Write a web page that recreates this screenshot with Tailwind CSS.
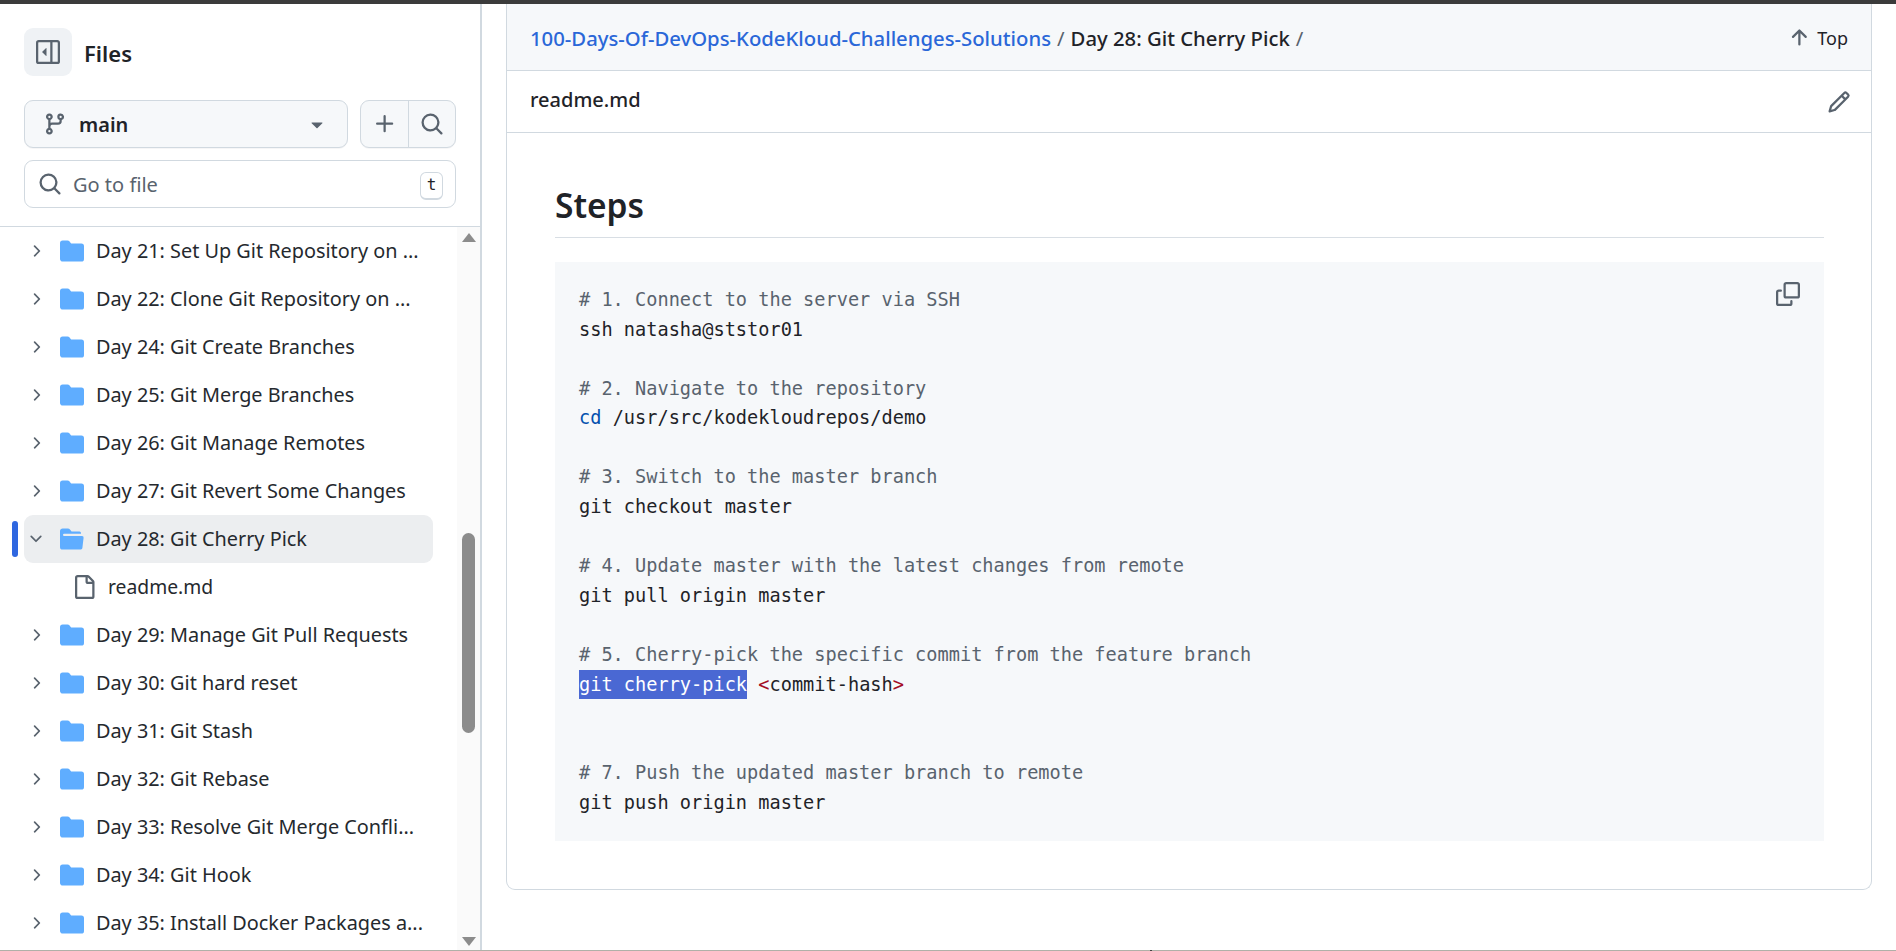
<!DOCTYPE html>
<html lang="en">
<head>
    <meta charset="UTF-8">
    <title>Day 28: Git Cherry Pick</title>
    <script src="https://cdn.jsdelivr.net/npm/@tailwindcss/browser@4"></script>
</head>
<body class="h-screen overflow-hidden flex flex-col bg-white text-[#1f2328] font-['Noto_Sans',sans-serif]">
    <!-- Icon sprites -->
    <svg class="hidden">
        <symbol id="chev-right" viewBox="0 0 16 16"><path d="M6.22 3.22a.75.75 0 0 1 1.06 0l4.25 4.25a.75.75 0 0 1 0 1.06l-4.25 4.25a.751.751 0 0 1-1.042-.018.751.751 0 0 1-.018-1.042L9.94 8 6.22 4.28a.75.75 0 0 1 0-1.06Z"/></symbol>
        <symbol id="chev-down" viewBox="0 0 16 16"><path d="M12.78 5.22a.749.749 0 0 1 0 1.06l-4.25 4.25a.749.749 0 0 1-1.06 0L3.22 6.28a.749.749 0 1 1 1.06-1.06L8 8.939l3.72-3.719a.749.749 0 0 1 1.06 0Z"/></symbol>
        <symbol id="folder" viewBox="0 0 16 16"><path d="M1.75 1A1.75 1.75 0 0 0 0 2.75v10.5C0 14.216.784 15 1.75 15h12.5A1.75 1.75 0 0 0 16 13.25v-8.5A1.75 1.75 0 0 0 14.25 3H7.5a.25.25 0 0 1-.2-.1l-.9-1.2C6.07 1.26 5.55 1 5 1H1.75Z"/></symbol>
        <symbol id="folder-open" viewBox="0 0 16 16"><path d="M.513 1.513A1.75 1.75 0 0 1 1.75 1h3.5c.55 0 1.07.26 1.4.7l.9 1.2a.25.25 0 0 0 .2.1H13a1 1 0 0 1 1 1v.5H2.75a.75.75 0 0 0 0 1.5h11.978a1 1 0 0 1 .994 1.117L15 13.25A1.75 1.75 0 0 1 13.25 15H1.75A1.75 1.75 0 0 1 0 13.25V2.75c0-.464.184-.91.513-1.237Z"/></symbol>
        <symbol id="search" viewBox="0 0 16 16"><path d="M10.68 11.74a6 6 0 0 1-7.922-8.982 6 6 0 0 1 8.982 7.922l3.04 3.04a.749.749 0 0 1-.326 1.275.749.749 0 0 1-.734-.215ZM11.5 7a4.499 4.499 0 1 0-8.997 0A4.499 4.499 0 0 0 11.5 7Z"/></symbol>
    </svg>

    <div class="h-1 shrink-0 bg-[#3b3b3b]"></div>

    <div class="flex-1 min-h-0 flex">
        <!-- Sidebar -->
        <aside class="w-[482px] shrink-0 flex flex-col border-r-2 border-[#d1d9e0]">
            <div class="shrink-0 h-[223px] px-6 border-b border-[#d1d9e0]">
                <div class="flex items-center gap-[12px] pt-6">
                    <button class="w-12 h-12 rounded-[9px] bg-[#eff2f5] flex items-center justify-center text-[#59636e]">
                        <svg class="w-6 h-6" viewBox="0 0 16 16" fill="currentColor"><path d="M4.177 7.823l2.396-2.396A.25.25 0 0 1 7 5.604v4.792a.25.25 0 0 1-.427.177L4.177 8.177a.25.25 0 0 1 0-.354Z"/><path d="M1.75 0h12.5C15.216 0 16 .784 16 1.75v12.5A1.75 1.75 0 0 1 14.25 16H1.75A1.75 1.75 0 0 1 0 14.25V1.75C0 .784.784 0 1.75 0ZM1.5 1.75v12.5c0 .138.112.25.25.25H9.5v-13H1.75a.25.25 0 0 0-.25.25ZM11 14.5h3.25a.25.25 0 0 0 .25-.25V1.75a.25.25 0 0 0-.25-.25H11Z"/></svg>
                    </button>
                    <h2 class="text-[22px] font-semibold leading-none pt-[1px]">Files</h2>
                </div>
                <div class="flex gap-3 mt-6">
                    <button class="w-[324px] h-12 rounded-[9px] border border-[#d1d9e0] bg-[#f6f8fa] flex items-center pl-[18px] pr-[18px] shadow-[0_1px_0_rgba(31,35,40,0.04)]">
                        <svg class="w-6 h-6 text-[#59636e]" viewBox="0 0 16 16" fill="currentColor"><path d="M9.5 3.25a2.25 2.25 0 1 1 3 2.122V6A2.5 2.5 0 0 1 10 8.5H6a1 1 0 0 0-1 1v1.128a2.251 2.251 0 1 1-1.5 0V5.372a2.25 2.25 0 1 1 1.5 0v1.836A2.493 2.493 0 0 1 6 7h4a1 1 0 0 0 1-1v-.628A2.25 2.25 0 0 1 9.5 3.25Zm-6 0a.75.75 0 1 0 1.5 0 .75.75 0 0 0-1.5 0Zm8.25-.75a.75.75 0 1 0 0 1.5.75.75 0 0 0 0-1.5ZM4.25 12a.75.75 0 1 0 0 1.5.75.75 0 0 0 0-1.5Z"/></svg>
                        <span class="ml-[12px] pt-[2px] text-[20px] font-semibold">main</span>
                        <svg class="w-6 h-6 ml-auto text-[#59636e]" viewBox="0 0 16 16" fill="currentColor"><path d="m4.427 7.427 3.396 3.396a.25.25 0 0 0 .354 0l3.396-3.396A.25.25 0 0 0 11.396 7H4.604a.25.25 0 0 0-.177.427Z"/></svg>
                    </button>
                    <div class="w-24 h-12 rounded-[9px] border border-[#d1d9e0] bg-[#f6f8fa] flex shadow-[0_1px_0_rgba(31,35,40,0.04)]">
                        <button class="w-12 border-r border-[#d1d9e0] flex items-center justify-center text-[#59636e]">
                            <svg class="w-6 h-6" viewBox="0 0 16 16" fill="currentColor"><path d="M7.75 2a.75.75 0 0 1 .75.75V7h4.25a.75.75 0 0 1 0 1.5H8.5v4.25a.75.75 0 0 1-1.5 0V8.5H2.75a.75.75 0 0 1 0-1.5H7V2.75A.75.75 0 0 1 7.75 2Z"/></svg>
                        </button>
                        <button class="flex-1 flex items-center justify-center text-[#59636e]">
                            <svg class="w-6 h-6" fill="currentColor"><use href="#search"/></svg>
                        </button>
                    </div>
                </div>
                <div class="h-12 mt-3 rounded-[9px] border border-[#d1d9e0] flex items-center pl-[13px] pr-3 text-[#59636e]">
                    <svg class="w-6 h-6" fill="currentColor"><use href="#search"/></svg>
                    <span class="ml-[11px] pt-[2px] text-[20px]">Go to file</span>
                    <kbd class="ml-auto mt-[3px] w-[23px] h-[28px] rounded-[6px] border border-[#d1d9e0] border-b-2 flex items-center justify-center font-['DejaVu_Sans_Mono',monospace] text-[16px] text-[#1f2328]">t</kbd>
                </div>
            </div>

            <div class="flex-1 min-h-0 flex">
                <!-- File tree -->
                <ul class="flex-1 min-w-0 overflow-hidden pl-6 pr-6 text-[19.85px] leading-[48px] text-[#25292e]">
                    <li class="h-12 flex items-center"><svg class="w-[18px] h-[18px] ml-[3px] text-[#59636e]" fill="currentColor"><use href="#chev-right"/></svg><svg class="w-6 h-6 ml-[15px] text-[#5fadff]" fill="currentColor"><use href="#folder"/></svg><span class="ml-[12px]">Day 21: Set Up Git Repository on ...</span></li>
                    <li class="h-12 flex items-center"><svg class="w-[18px] h-[18px] ml-[3px] text-[#59636e]" fill="currentColor"><use href="#chev-right"/></svg><svg class="w-6 h-6 ml-[15px] text-[#5fadff]" fill="currentColor"><use href="#folder"/></svg><span class="ml-[12px]">Day 22: Clone Git Repository on ...</span></li>
                    <li class="h-12 flex items-center"><svg class="w-[18px] h-[18px] ml-[3px] text-[#59636e]" fill="currentColor"><use href="#chev-right"/></svg><svg class="w-6 h-6 ml-[15px] text-[#5fadff]" fill="currentColor"><use href="#folder"/></svg><span class="ml-[12px]">Day 24: Git Create Branches</span></li>
                    <li class="h-12 flex items-center"><svg class="w-[18px] h-[18px] ml-[3px] text-[#59636e]" fill="currentColor"><use href="#chev-right"/></svg><svg class="w-6 h-6 ml-[15px] text-[#5fadff]" fill="currentColor"><use href="#folder"/></svg><span class="ml-[12px]">Day 25: Git Merge Branches</span></li>
                    <li class="h-12 flex items-center"><svg class="w-[18px] h-[18px] ml-[3px] text-[#59636e]" fill="currentColor"><use href="#chev-right"/></svg><svg class="w-6 h-6 ml-[15px] text-[#5fadff]" fill="currentColor"><use href="#folder"/></svg><span class="ml-[12px]">Day 26: Git Manage Remotes</span></li>
                    <li class="h-12 flex items-center"><svg class="w-[18px] h-[18px] ml-[3px] text-[#59636e]" fill="currentColor"><use href="#chev-right"/></svg><svg class="w-6 h-6 ml-[15px] text-[#5fadff]" fill="currentColor"><use href="#folder"/></svg><span class="ml-[12px]">Day 27: Git Revert Some Changes</span></li>
                    <li class="relative h-12 flex items-center rounded-[9px] bg-[#eceef0]"><span class="absolute -left-3 top-[6px] w-[6px] h-9 rounded-full bg-[#2f67e0]"></span><svg class="w-[18px] h-[18px] ml-[3px] text-[#59636e]" fill="currentColor"><use href="#chev-down"/></svg><svg class="w-6 h-6 ml-[15px] text-[#5fadff]" fill="currentColor"><use href="#folder-open"/></svg><span class="ml-[12px]">Day 28: Git Cherry Pick</span></li>
                    <li class="h-12 flex items-center pl-[48px]">
                        <svg class="w-6 h-6 text-[#59636e]" viewBox="0 0 16 16" fill="currentColor"><path d="M2 1.75C2 .784 2.784 0 3.75 0h6.586c.464 0 .909.184 1.237.513l2.914 2.914c.329.328.513.773.513 1.237v9.586A1.75 1.75 0 0 1 13.25 16h-9.5A1.75 1.75 0 0 1 2 14.25Zm1.75-.25a.25.25 0 0 0-.25.25v12.5c0 .138.112.25.25.25h9.5a.25.25 0 0 0 .25-.25V6h-2.75A1.75 1.75 0 0 1 9 4.25V1.5Zm6.75.062V4.25c0 .138.112.25.25.25h2.688l-.011-.013-2.914-2.914-.013-.011Z"/></svg>
                        <span class="ml-[12px] text-[19.3px]">readme.md</span>
                    </li>
                    <li class="h-12 flex items-center"><svg class="w-[18px] h-[18px] ml-[3px] text-[#59636e]" fill="currentColor"><use href="#chev-right"/></svg><svg class="w-6 h-6 ml-[15px] text-[#5fadff]" fill="currentColor"><use href="#folder"/></svg><span class="ml-[12px]">Day 29: Manage Git Pull Requests</span></li>
                    <li class="h-12 flex items-center"><svg class="w-[18px] h-[18px] ml-[3px] text-[#59636e]" fill="currentColor"><use href="#chev-right"/></svg><svg class="w-6 h-6 ml-[15px] text-[#5fadff]" fill="currentColor"><use href="#folder"/></svg><span class="ml-[12px]">Day 30: Git hard reset</span></li>
                    <li class="h-12 flex items-center"><svg class="w-[18px] h-[18px] ml-[3px] text-[#59636e]" fill="currentColor"><use href="#chev-right"/></svg><svg class="w-6 h-6 ml-[15px] text-[#5fadff]" fill="currentColor"><use href="#folder"/></svg><span class="ml-[12px]">Day 31: Git Stash</span></li>
                    <li class="h-12 flex items-center"><svg class="w-[18px] h-[18px] ml-[3px] text-[#59636e]" fill="currentColor"><use href="#chev-right"/></svg><svg class="w-6 h-6 ml-[15px] text-[#5fadff]" fill="currentColor"><use href="#folder"/></svg><span class="ml-[12px]">Day 32: Git Rebase</span></li>
                    <li class="h-12 flex items-center"><svg class="w-[18px] h-[18px] ml-[3px] text-[#59636e]" fill="currentColor"><use href="#chev-right"/></svg><svg class="w-6 h-6 ml-[15px] text-[#5fadff]" fill="currentColor"><use href="#folder"/></svg><span class="ml-[12px]">Day 33: Resolve Git Merge Confli...</span></li>
                    <li class="h-12 flex items-center"><svg class="w-[18px] h-[18px] ml-[3px] text-[#59636e]" fill="currentColor"><use href="#chev-right"/></svg><svg class="w-6 h-6 ml-[15px] text-[#5fadff]" fill="currentColor"><use href="#folder"/></svg><span class="ml-[12px]">Day 34: Git Hook</span></li>
                    <li class="h-12 flex items-center"><svg class="w-[18px] h-[18px] ml-[3px] text-[#59636e]" fill="currentColor"><use href="#chev-right"/></svg><svg class="w-6 h-6 ml-[15px] text-[#5fadff]" fill="currentColor"><use href="#folder"/></svg><span class="ml-[12px]">Day 35: Install Docker Packages a...</span></li>
                </ul>
                <!-- Scrollbar -->
                <div class="w-[23px] shrink-0 bg-[#fafafa] flex flex-col items-center">
                    <span class="mt-[6px] w-0 h-0 border-x-[7px] border-x-transparent border-b-[9px] border-b-[#8c8c8c]"></span>
                    <span class="w-[13px] h-[200px] rounded-full bg-[#8c8c8c] mt-[291px]"></span>
                    <span class="mt-auto mb-[4px] w-0 h-0 border-x-[7px] border-x-transparent border-t-[9px] border-t-[#8c8c8c]"></span>
                </div>
            </div>
        </aside>

        <!-- Main content -->
        <main class="flex-1 min-w-0 pl-[24px] pr-6">
            <div class="h-[886px] border-x border-b border-[#d1d9e0] rounded-b-[9px] flex flex-col">
                <div class="h-[67px] shrink-0 bg-[#f6f8fa] border-b border-[#d1d9e0] flex items-center pl-[23px] pr-[23px] pt-[2px] text-[20.3px]">
                    <a class="text-[#2a67d8] font-medium">100-Days-Of-DevOps-KodeKloud-Challenges-Solutions</a>
                    <span class="mx-[6px] text-[#59636e]">/</span>
                    <span class="font-medium">Day 28: Git Cherry Pick</span>
                    <span class="mx-[6px] text-[#59636e]">/</span>
                    <span class="ml-auto flex items-center text-[18px]">
                        <svg class="w-6 h-6 text-[#59636e]" viewBox="0 0 16 16" fill="currentColor"><path d="M3.47 7.78a.75.75 0 0 1 0-1.06l4.25-4.25a.75.75 0 0 1 1.06 0l4.25 4.25a.751.751 0 0 1-.018 1.042.751.751 0 0 1-1.042.018L9 4.81v7.44a.75.75 0 0 1-1.5 0V4.81L4.53 7.78a.75.75 0 0 1-1.06 0Z"/></svg>
                        <span class="ml-[6px]">Top</span>
                    </span>
                </div>
                <div class="h-[62px] shrink-0 border-b border-[#d1d9e0] flex items-center pl-[23px] pr-[20px]">
                    <span class="text-[20px] font-medium text-[#1f2328] -translate-y-[2px]">readme.md</span>
                    <svg class="w-6 h-6 ml-auto text-[#59636e]" viewBox="0 0 16 16" fill="currentColor"><path d="M11.013 1.427a1.75 1.75 0 0 1 2.474 0l1.086 1.086a1.75 1.75 0 0 1 0 2.474l-8.61 8.61c-.21.21-.47.364-.756.445l-3.251.93a.75.75 0 0 1-.927-.928l.929-3.25c.081-.286.235-.547.445-.758l8.61-8.61Zm.176 4.823L9.75 4.81l-6.286 6.287a.253.253 0 0 0-.064.108l-.558 1.953 1.953-.558a.253.253 0 0 0 .108-.064Zm1.238-3.763a.25.25 0 0 0-.354 0L10.811 3.75l1.439 1.44 1.263-1.263a.25.25 0 0 0 0-.354Z"/></svg>
                </div>
                <article class="pl-[48px] pr-[47px]">
                    <h1 class="h-[105px] pt-[49px] border-b border-[#d8dee4] text-[33.5px] leading-[46px] font-semibold">Steps</h1>
                    <div class="relative mt-6 h-[579px] bg-[#f6f8fa] pl-6 pr-6 pt-[23px]">
                        <button class="absolute right-[24px] top-[20px] text-[#59636e]">
                            <svg class="w-6 h-6" viewBox="0 0 16 16" fill="currentColor"><path d="M0 6.75C0 5.784.784 5 1.75 5h1.5a.75.75 0 0 1 0 1.5h-1.5a.25.25 0 0 0-.25.25v7.5c0 .138.112.25.25.25h7.5a.25.25 0 0 0 .25-.25v-1.5a.75.75 0 0 1 1.5 0v1.5A1.75 1.75 0 0 1 9.25 16h-7.5A1.75 1.75 0 0 1 0 14.25Z"/><path d="M5 1.75C5 .784 5.784 0 6.75 0h7.5C15.216 0 16 .784 16 1.75v7.5A1.75 1.75 0 0 1 14.25 11h-7.5A1.75 1.75 0 0 1 5 9.25Zm1.75-.25a.25.25 0 0 0-.25.25v7.5c0 .138.112.25.25.25h7.5a.25.25 0 0 0 .25-.25v-7.5a.25.25 0 0 0-.25-.25Z"/></svg>
                        </button>
<pre class="font-['DejaVu_Sans_Mono',monospace] text-[18.63px] leading-[29.58px] text-[#1f2328]"><span class="text-[#59636e]"># 1. Connect to the server via SSH</span>
ssh natasha@ststor01

<span class="text-[#59636e]"># 2. Navigate to the repository</span>
<span class="text-[#0550ae]">cd</span> /usr/src/kodekloudrepos/demo

<span class="text-[#59636e]"># 3. Switch to the master branch</span>
git checkout master

<span class="text-[#59636e]"># 4. Update master with the latest changes from remote</span>
git pull origin master

<span class="text-[#59636e]"># 5. Cherry-pick the specific commit from the feature branch</span>
<span class="inline-block bg-[#4a68d3] text-white">git cherry-pick</span> <span class="text-[#a40e26]">&lt;</span>commit-hash<span class="text-[#a40e26]">&gt;</span>


<span class="text-[#59636e]"># 7. Push the updated master branch to remote</span>
git push origin master</pre>
                    </div>
                </article>
            </div>
        </main>
    </div>
    <!-- Bottom edge of the window, with the small dark notch -->
    <div class="h-px shrink-0 bg-[#b0b0a8]"><div class="ml-[1150px] w-[2px] h-px bg-[#444444]"></div></div>
</body>
</html>
